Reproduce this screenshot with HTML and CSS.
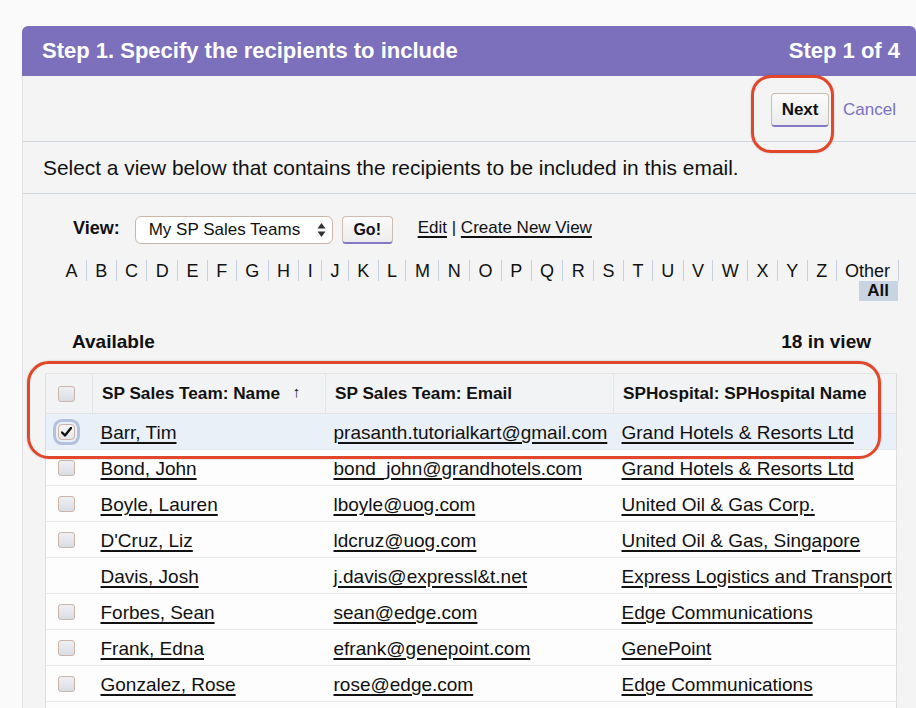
FILE: index.html
```html
<!DOCTYPE html>
<html lang="en">
<head>
<meta charset="utf-8">
<title>Step 1. Specify the recipients to include</title>
<link rel="stylesheet" href="styles.css">
</head>
<body>
<div class="panel">
  <div class="panel-head">
    <h2 class="title">Step 1. Specify the recipients to include</h2>
    <span class="step">Step 1 of 4</span>
  </div>
  <div class="panel-body">
    <div class="actions">
      <button class="btn btn-next">Next</button>
      <a class="cancel">Cancel</a>
    </div>
    <div class="intro">Select a view below that contains the recipients to be included in this email.</div>
    <div class="filters">
      <div class="view-row">
        <span class="view-label">View:</span>
        <span class="select">My SP Sales Teams
          <svg class="sel-arrows" width="9" height="16" viewBox="0 0 9 16"><path d="M4.5 1 L8.5 6.5 L0.5 6.5 Z M4.5 15 L8.5 9.5 L0.5 9.5 Z" fill="#333"/></svg>
        </span>
        <button class="btn btn-go">Go!</button>
        <span class="view-links"><a class="ulink">Edit</a> | <a class="ulink">Create New View</a></span>
      </div>
      <div class="alpha">
        <div class="alpha-row">
          <span>A</span><span>B</span><span>C</span><span>D</span><span>E</span><span>F</span><span>G</span><span>H</span><span>I</span><span>J</span><span>K</span><span>L</span><span>M</span><span>N</span><span>O</span><span>P</span><span>Q</span><span>R</span><span>S</span><span>T</span><span>U</span><span>V</span><span>W</span><span>X</span><span>Y</span><span>Z</span><span>Other</span>
        </div>
        <span class="alpha-all">All</span>
      </div>
      <div class="list">
        <div class="list-bar">
          <span>Available</span>
          <span>18 in view</span>
        </div>
        <table class="grid">
          <colgroup><col class="c-cb"><col class="c-name"><col class="c-email"><col class="c-hosp"></colgroup>
          <thead>
            <tr><th><span class="cb"></span></th><th>SP Sales Team: Name <span class="sort">↑</span></th><th>SP Sales Team: Email</th><th>SPHospital: SPHospital Name</th></tr>
          </thead>
          <tbody>
            <tr class="sel"><td><span class="cb checked focus"><svg width="11" height="10" viewBox="0 0 11 10"><path d="M1 5.5 L4 8.5 L10 1" fill="none" stroke="#111" stroke-width="2.4" stroke-linecap="round" stroke-linejoin="round"/></svg></span></td><td><a class="ulink">Barr, Tim</a></td><td><a class="ulink">prasanth.tutorialkart@gmail.com</a></td><td><a class="ulink">Grand Hotels &amp; Resorts Ltd</a></td></tr>
            <tr><td><span class="cb"></span></td><td><a class="ulink">Bond, John</a></td><td><a class="ulink">bond_john@grandhotels.com</a></td><td><a class="ulink">Grand Hotels &amp; Resorts Ltd</a></td></tr>
            <tr><td><span class="cb"></span></td><td><a class="ulink">Boyle, Lauren</a></td><td><a class="ulink">lboyle@uog.com</a></td><td><a class="ulink">United Oil &amp; Gas Corp.</a></td></tr>
            <tr><td><span class="cb"></span></td><td><a class="ulink">D'Cruz, Liz</a></td><td><a class="ulink">ldcruz@uog.com</a></td><td><a class="ulink">United Oil &amp; Gas, Singapore</a></td></tr>
            <tr><td></td><td><a class="ulink">Davis, Josh</a></td><td><a class="ulink">j.davis@expressl&amp;t.net</a></td><td><a class="ulink">Express Logistics and Transport</a></td></tr>
            <tr><td><span class="cb"></span></td><td><a class="ulink">Forbes, Sean</a></td><td><a class="ulink">sean@edge.com</a></td><td><a class="ulink">Edge Communications</a></td></tr>
            <tr><td><span class="cb"></span></td><td><a class="ulink">Frank, Edna</a></td><td><a class="ulink">efrank@genepoint.com</a></td><td><a class="ulink">GenePoint</a></td></tr>
            <tr><td><span class="cb"></span></td><td><a class="ulink">Gonzalez, Rose</a></td><td><a class="ulink">rose@edge.com</a></td><td><a class="ulink">Edge Communications</a></td></tr>
            <tr class="stub"><td></td><td></td><td></td><td></td></tr>
          </tbody>
        </table>
      </div>
    </div>
  </div>
</div>
<div class="mark mark-next"></div>
<div class="mark mark-row"></div>
</body>
</html>
```
FILE: styles.css
```css
* { box-sizing: border-box; }
html, body { margin: 0; padding: 0; }
body {
  background: #fafafa;
  font-family: "Liberation Sans", Arial, Helvetica, sans-serif;
  color: #111;
  width: 916px;
  height: 708px;
  overflow: hidden;
  position: relative;
}
.panel {
  margin: 26px 0 0 22px;
  width: 894px;
}
.panel-head {
  height: 50px;
  background: #7c70bd;
  border-radius: 6px 6px 0 0;
  display: flex;
  align-items: center;
  justify-content: space-between;
  padding: 0 16px 0 20px;
  color: #fff;
}
.title {
  margin: 0;
  font-size: 22px;
  font-weight: bold;
}
.step {
  font-size: 22px;
  font-weight: bold;
}
.panel-body {
  background: #f4f4f4;
  border-left: 1px solid #e2e2e2;
}
.actions {
  height: 66px;
  display: flex;
  align-items: center;
  justify-content: flex-end;
  padding: 3px 20px 0 0;
  gap: 14px;
  border-bottom: 1px solid #cfd6df;
}
.btn {
  font-family: inherit;
  font-weight: bold;
  color: #111;
  background: linear-gradient(#fbfbfb, #ececec);
  border: 1px solid #cdbcb0;
  border-bottom: 2px solid #8479c4;
  border-radius: 4px;
  padding: 0;
}
.btn-next {
  width: 58px;
  height: 34px;
  font-size: 17px;
}
.cancel {
  font-size: 17px;
  color: #7a70c0;
}
.intro {
  height: 52px;
  display: flex;
  align-items: center;
  padding-left: 20px;
  font-size: 20.9px;
  border-bottom: 1px solid #cfd6df;
}
.filters {
  padding-top: 22px;
}
.view-row {
  display: flex;
  align-items: center;
  height: 28px;
  margin-left: 50px;
}
.view-label {
  font-weight: bold;
  font-size: 18px;
  margin-right: 15px;
  position: relative;
  top: -2px;
}
.select {
  width: 198px;
  height: 28px;
  border: 1px solid #cbb7a8;
  border-radius: 6px;
  background: #fff;
  font-size: 17px;
  display: flex;
  align-items: center;
  justify-content: space-between;
  padding: 0 6px 0 13px;
}
.sel-arrows { display: block; }
.btn-go {
  width: 51px;
  height: 28px;
  font-size: 16px;
  margin-left: 9px;
}
.view-links {
  margin-left: 25px;
  font-size: 17px;
  position: relative;
  top: -2px;
}
.ulink {
  color: #111;
  text-decoration: underline;
  text-decoration-thickness: 2px;
  text-underline-offset: 3px;
}
.alpha {
  margin: 16px 0 0 34px;
  width: 841px;
  display: flex;
  flex-direction: column;
  align-items: flex-end;
}
.alpha-row {
  display: flex;
  width: 100%;
}
.alpha-row span {
  font-size: 18px;
  line-height: 20px;
  padding: 1px 8.4px 0;
  border-right: 1px solid #c6d2e0;
}
.alpha-all {
  font-size: 17px;
  font-weight: bold;
  line-height: 20px;
  background: #c9d4e3;
  padding: 0 9px 0 8px;
}
.list {
  margin: 30px 0 0 22px;
  width: 851px;
}
.list-bar {
  display: flex;
  justify-content: space-between;
  padding: 0 25px 0 27px;
  font-weight: bold;
  font-size: 19px;
  height: 22px;
  line-height: 22px;
  margin-bottom: 20px;
}
.grid {
  width: 851px;
  border-collapse: collapse;
  table-layout: fixed;
  background: #fdfdfd;
  border-left: 1px solid #dedede;
  border-right: 1px solid #dedede;
  border-top: 1px solid #e3e3e3;
}
.c-cb { width: 47px; }
.c-name { width: 233px; }
.c-email { width: 288px; }
.c-hosp { width: 283px; }
.grid th {
  height: 40px;
  background: #f2f3f4;
  text-align: left;
  font-size: 17.2px;
  font-weight: bold;
  padding: 0 0 1px 9px;
  border-right: 1px solid #e1e4e8;
  border-bottom: 1px solid #e1e4e8;
  white-space: nowrap;
}
.grid th:first-child { padding: 0 0 0 12px; }
.grid th:last-child { border-right: none; }
.sort {
  font-size: 15px;
  margin-left: 8px;
  position: relative;
  top: -2px;
}
.grid td {
  height: 36px;
  font-size: 19px;
  padding: 3px 0 0 8px;
  border-bottom: 1px solid #e6e7e8;
  white-space: nowrap;
  overflow: hidden;
}
.grid td:first-child { padding: 0 0 0 12px; }
.grid tr.sel td { background: #e9f0f8; }
.cb {
  display: flex;
  align-items: center;
  justify-content: center;
  width: 17px;
  height: 16px;
  border: 1px solid #cdb4a6;
  border-radius: 3px;
  background: linear-gradient(#eef0f4, #d9dde5);
}
.cb.focus {
  box-shadow: 0 0 0 2px #e9f0f8, 0 0 0 5px #b5c0de;
  border-radius: 4px;
  background: linear-gradient(#f6f7f9, #e3e6ec);
}
.mark {
  position: absolute;
  border: 3px solid #e2472b;
  box-shadow: 0 0 2px rgba(0, 0, 0, 0.25);
}
.mark-next {
  left: 751px;
  top: 75px;
  width: 83px;
  height: 78px;
  border-radius: 20px;
}
.mark-row {
  left: 27px;
  top: 361px;
  width: 854px;
  height: 98px;
  border-radius: 22px;
}
```
